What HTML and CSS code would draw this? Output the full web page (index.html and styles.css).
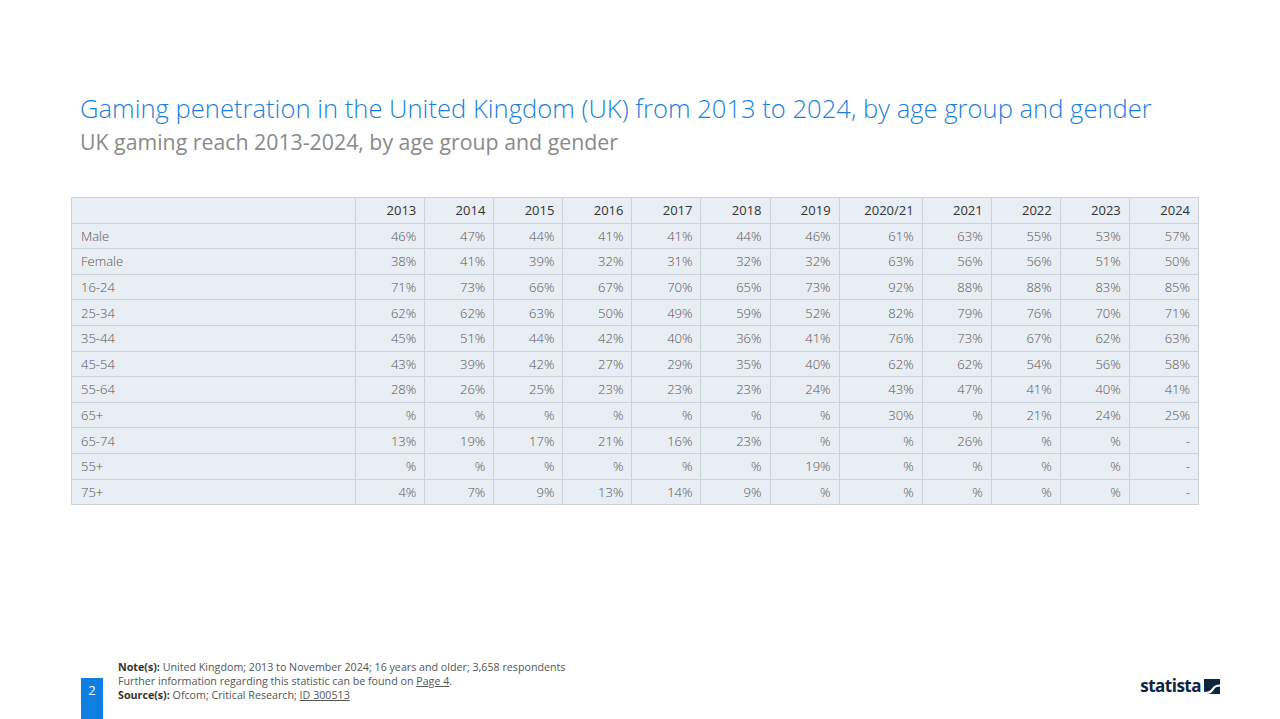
FILE: index.html
```html
<!DOCTYPE html>
<html>
<head>
<meta charset="utf-8">
<link rel="stylesheet" href="styles.css">
</head>
<body>
<div class="page">
  <header class="head">
    <h1 class="title">Gaming penetration in the United Kingdom (UK) from 2013 to 2024, by age group and gender</h1>
    <h2 class="subtitle">UK gaming reach 2013-2024, by age group and gender</h2>
  </header>
  <table class="data">
    <colgroup>
      <col class="c-label"><col class="c-n"><col class="c-n"><col class="c-n"><col class="c-n"><col class="c-n"><col class="c-n"><col class="c-n"><col class="c-w"><col class="c-n"><col class="c-n"><col class="c-n"><col class="c-n">
    </colgroup>
    <thead>
      <tr><th></th><th>2013</th><th>2014</th><th>2015</th><th>2016</th><th>2017</th><th>2018</th><th>2019</th><th>2020/21</th><th>2021</th><th>2022</th><th>2023</th><th>2024</th></tr>
    </thead>
    <tbody>
      <tr><td>Male</td><td>46%</td><td>47%</td><td>44%</td><td>41%</td><td>41%</td><td>44%</td><td>46%</td><td>61%</td><td>63%</td><td>55%</td><td>53%</td><td>57%</td></tr>
      <tr><td>Female</td><td>38%</td><td>41%</td><td>39%</td><td>32%</td><td>31%</td><td>32%</td><td>32%</td><td>63%</td><td>56%</td><td>56%</td><td>51%</td><td>50%</td></tr>
      <tr><td>16-24</td><td>71%</td><td>73%</td><td>66%</td><td>67%</td><td>70%</td><td>65%</td><td>73%</td><td>92%</td><td>88%</td><td>88%</td><td>83%</td><td>85%</td></tr>
      <tr><td>25-34</td><td>62%</td><td>62%</td><td>63%</td><td>50%</td><td>49%</td><td>59%</td><td>52%</td><td>82%</td><td>79%</td><td>76%</td><td>70%</td><td>71%</td></tr>
      <tr><td>35-44</td><td>45%</td><td>51%</td><td>44%</td><td>42%</td><td>40%</td><td>36%</td><td>41%</td><td>76%</td><td>73%</td><td>67%</td><td>62%</td><td>63%</td></tr>
      <tr><td>45-54</td><td>43%</td><td>39%</td><td>42%</td><td>27%</td><td>29%</td><td>35%</td><td>40%</td><td>62%</td><td>62%</td><td>54%</td><td>56%</td><td>58%</td></tr>
      <tr><td>55-64</td><td>28%</td><td>26%</td><td>25%</td><td>23%</td><td>23%</td><td>23%</td><td>24%</td><td>43%</td><td>47%</td><td>41%</td><td>40%</td><td>41%</td></tr>
      <tr><td>65+</td><td>%</td><td>%</td><td>%</td><td>%</td><td>%</td><td>%</td><td>%</td><td>30%</td><td>%</td><td>21%</td><td>24%</td><td>25%</td></tr>
      <tr><td>65-74</td><td>13%</td><td>19%</td><td>17%</td><td>21%</td><td>16%</td><td>23%</td><td>%</td><td>%</td><td>26%</td><td>%</td><td>%</td><td>-</td></tr>
      <tr><td>55+</td><td>%</td><td>%</td><td>%</td><td>%</td><td>%</td><td>%</td><td>19%</td><td>%</td><td>%</td><td>%</td><td>%</td><td>-</td></tr>
      <tr><td>75+</td><td>4%</td><td>7%</td><td>9%</td><td>13%</td><td>14%</td><td>9%</td><td>%</td><td>%</td><td>%</td><td>%</td><td>%</td><td>-</td></tr>
    </tbody>
  </table>
  <footer class="foot">
    <div class="pagenum">2</div>
    <div class="notes">
      <p><b>Note(s):</b> United Kingdom; 2013 to November 2024; 16 years and older; 3,658 respondents</p>
      <p>Further information regarding this statistic can be found on <u>Page 4</u>.</p>
      <p><b>Source(s):</b> Ofcom; Critical Research; <u>ID 300513</u></p>
    </div>
    <div class="logo">
      <span class="logo-text">statista</span>
      <svg class="logo-icon" width="16" height="15" viewBox="0 0 16 15">
        <path d="M0 0H16V5.5C12 5.5 10 6.5 8 9.5C6.5 12 4 13 0 13Z" fill="#0f2541"/>
        <path d="M16 15H2.5C6 15 8 13.5 9.5 11C11 8.5 13 7.5 16 7.5Z" fill="#0f2541"/>
      </svg>
    </div>
  </footer>
</div>
</body>
</html>
```

FILE: styles.css
```css
html, body {
  margin: 0;
  padding: 0;
  background: #ffffff;
}
.page {
  width: 1280px;
  height: 719px;
  position: relative;
  font-family: "Open Sans", "Noto Sans", sans-serif;
  display: flex;
  flex-direction: column;
  overflow: hidden;
}
.head {
  padding: 92px 0 0 80px;
}
.title {
  margin: 0;
  font-weight: 300;
  font-size: 25.6px;
  line-height: 34px;
  color: #1c7fdc;
  letter-spacing: 0;
}
.subtitle {
  margin: 1px 0 0 0;
  font-weight: 400;
  font-size: 21.3px;
  line-height: 30px;
  color: #8a8a8a;
}
.data {
  margin: 40px 0 0 71px;
  width: 1128px;
  border-collapse: collapse;
  table-layout: fixed;
  background: #e9edf4;
  font-size: 13px;
  color: #666;
}
.c-label { width: 284px; }
.c-n { width: 69px; }
.c-w { width: 83px; }
.data th, .data td {
  border: 1px solid #cdd2da;
  height: 24.6px;
  padding: 0 8px 0 9px;
  text-align: right;
  line-height: 16px;
  white-space: nowrap;
}
.data th {
  color: #333;
  font-weight: 400;
}
.data td {
  font-weight: 300;
  color: #555;
}
.data td:first-child {
  text-align: left;
}
.foot {
  margin-top: auto;
  height: 60px;
  display: flex;
  align-items: flex-start;
  position: relative;
}
.pagenum {
  margin: 19px 0 0 81px;
  width: 22px;
  height: 41px;
  background: #0e7fe1;
  color: #fff;
  font-size: 13px;
  display: flex;
  justify-content: center;
  padding-top: 3px;
  box-sizing: border-box;
}
.notes {
  margin: 1px 0 0 15px;
  font-size: 10.7px;
  line-height: 14px;
  color: #555;
}
.notes p {
  margin: 0;
}
.notes b {
  color: #333;
  font-weight: 700;
}
.logo {
  margin: 16px 60px 0 auto;
  display: flex;
  align-items: center;
  gap: 3px;
}
.logo-text {
  font-family: "Open Sans", sans-serif;
  font-weight: 700;
  font-size: 17px;
  letter-spacing: -0.5px;
  color: #0f2541;
  line-height: 22px;
}
.logo-icon {
  display: block;
  margin-top: 1px;
}
```
